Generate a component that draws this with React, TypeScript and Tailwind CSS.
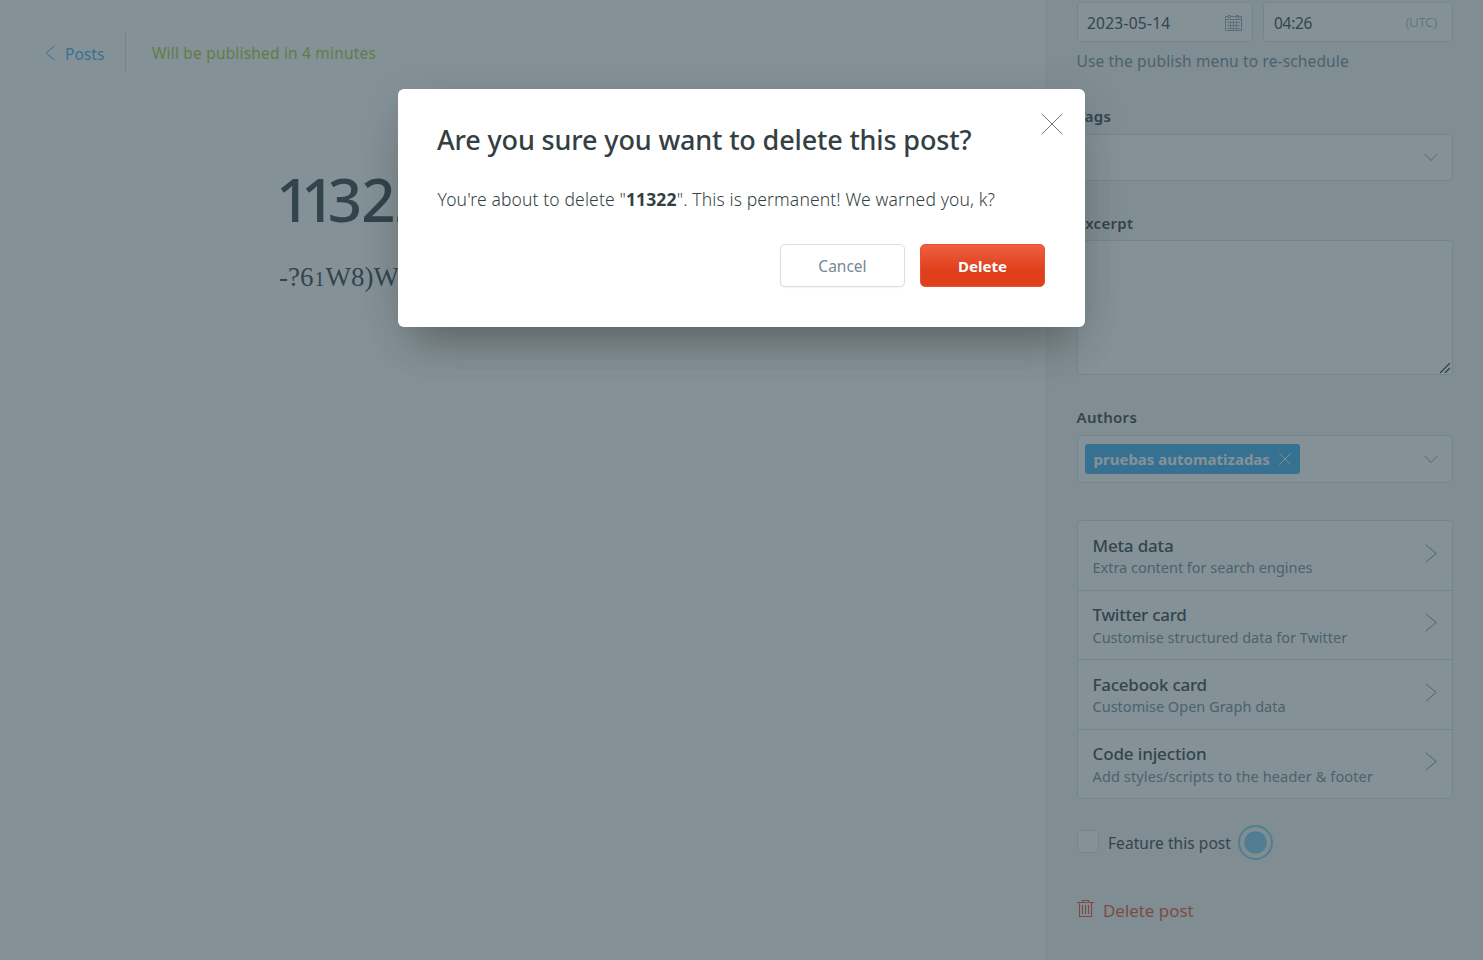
import type { ReactNode } from "react";

const cards = [
  { title: "Meta data", text: "Extra content for search engines", t: "tracking-[-0.17px]", d: "tracking-[-0.02px]" },
  { title: "Twitter card", text: "Customise structured data for Twitter", t: "tracking-[-0.28px]", d: "tracking-[-0.02px]" },
  { title: "Facebook card", text: "Customise Open Graph data", t: "tracking-[-0.24px]", d: "tracking-[0.01px]" },
  { title: "Code injection", text: "Add styles/scripts to the header & footer", t: "tracking-[-0.14px]", d: "tracking-[0.12px]" },
];

function Label({ children, className }: { children: ReactNode; className: string }) {
  return <div className={`text-[15px] leading-5 font-semibold tracking-[0.3px] text-[#343f44] ${className}`}>{children}</div>;
}

function ChevronDown() {
  return (
    <svg width="14" height="9" viewBox="0 0 14 9" fill="none" stroke="#738a94" strokeWidth="0.9">
      <path d="M.7 1 7 7.5 13.3 1" />
    </svg>
  );
}

function CalendarIcon() {
  return (
    <svg width="17" height="17" viewBox="0 0 17 17" fill="none" stroke="#93a5ad" strokeWidth="1">
      <path d="M3 2.5H.5v14h16v-14H14M6 2.5h5M.5 5.5h16" />
      <path d="M3.500 1.500h2v2h-2zM11.500 1.500h2v2h-2z" />
      <path strokeWidth="0.8" d="M2 8.500h13M2 11.500h13M2 14.500h13M5.500 7v9M8.500 7v9M11.500 7v9" />
    </svg>
  );
}

function Sidebar() {
  return (
    <aside className="h-[960px] w-[437px] shrink-0 border-l border-[#e6eef1] bg-[#f4f5f6] pt-[2px] pr-[30px] pl-[30px]">
      <div className="flex gap-[10px]">
        <div className="flex h-10 w-[176px] items-center justify-between rounded border border-[#d4e4ea] bg-white pr-[10px] pl-[9px]">
          <span className="pt-[3px] text-[15.5px] tracking-[0.25px] text-[#343f44]">2023-05-14</span>
          <CalendarIcon />
        </div>
        <div className="flex h-10 w-[190px] items-center justify-between rounded border border-[#d4e4ea] bg-white pr-[15px] pl-[10px]">
          <span className="pt-[3px] text-[15.5px] tracking-[-0.3px] text-[#343f44]">04:26</span>
          <span className="pt-[2px] text-[13px] font-light text-[#8fa2aa]">(UTC)</span>
        </div>
      </div>
      <div className="mt-[9px] -ml-[0.5px] text-[15.5px] leading-5 tracking-[0.14px] text-[#738a94]">Use the publish menu to re-schedule</div>

      <Label className="mt-[35px]">Tags</Label>
      <div className="mt-[8px] flex h-[47px] items-center justify-end rounded border border-[#d4e4ea] bg-white pr-[14px]">
        <ChevronDown />
      </div>

      <Label className="mt-[32px] -ml-[0.5px]">Excerpt</Label>
      <div className="mt-[7px] flex h-[135px] items-end justify-end rounded border border-[#d4e4ea] bg-white pr-[2px] pb-[1px]">
        <svg width="10" height="10" viewBox="0 0 10 10" stroke="#1d2426" strokeWidth="1.2">
          <path d="M0 10 10 0M5 10l5-5" />
        </svg>
      </div>

      <Label className="mt-[32px] -ml-[0.5px]">Authors</Label>
      <div className="mt-[8px] flex h-12 items-center justify-between rounded border border-[#d4e4ea] bg-white pr-[14px] pl-[7px]">
        <div className="flex h-[30px] w-[215px] items-center justify-between rounded-[3px] bg-[#3eb0ef] pr-[9px] pl-[8.5px]">
          <span className="text-[15px] font-bold text-white">pruebas automatizadas</span>
          <svg width="12" height="12" viewBox="0 0 12 12" stroke="white" strokeWidth="0.9">
            <path d="m.4.4 11.200 11.200M11.600.4.4 11.600" />
          </svg>
        </div>
        <ChevronDown />
      </div>

      <div className="mt-[37px] flex h-[279px] flex-col rounded border border-[#d4e4ea] bg-white">
        {cards.map((c, i) => (
          <div key={c.title} className={`flex flex-1 items-center justify-between pr-[15px] pl-[14.5px] ${i ? "border-t border-[#d4e4ea]" : ""}`}>
            <div className="pt-[2px]">
              <div className={`text-[17px] leading-[22px] font-medium text-[#343f44] ${c.t}`}>{c.title}</div>
              <div className={`-mt-[0.5px] text-[14.5px] leading-[22px] text-[#738a94] ${c.d}`}>{c.text}</div>
            </div>
            <svg className="-mt-1" width="12" height="19" viewBox="0 0 12 19" fill="none" stroke="#738a94" strokeWidth="1">
              <path d="m.7.7 10.500 8.800L.7 18.300" />
            </svg>
          </div>
        ))}
      </div>

      <div className="mt-[26px] flex h-[35px] items-center">
        <div className="-mt-[2px] h-[23px] w-[22px] rounded-[4px] border border-[#d4e4ea] bg-white" />
        <span className="ml-[9px] w-[130px] pt-[2px] text-[15.5px] tracking-[0.05px] text-[#343f44]">Feature this post</span>
        <svg width="35" height="35" viewBox="0 0 35 35" fill="none">
          <circle cx="17.500" cy="17.500" r="16.500" stroke="#81cdf5" strokeWidth="2" />
          <circle cx="17.500" cy="17.500" r="11.300" fill="#81cdf5" />
        </svg>
      </div>

      <div className="mt-[39px] flex items-center text-[#f05230]">
        <svg className="-mt-1" width="17" height="18" viewBox="0 0 17 18" fill="none" stroke="currentColor" strokeWidth="1.1">
          <path d="M0 2.500h17M5.500 2.500V.5h6v2M2.500 2.500v14h12v-14M5.500 5v9M8.500 5v9M11.500 5v9" />
        </svg>
        <span className="ml-[9px] text-[17px] leading-6 tracking-[-0.05px]">Delete post</span>
      </div>
    </aside>
  );
}

function Editor() {
  return (
    <main className="h-[960px] flex-1 bg-white">
      <header className="flex h-[74px] items-end pl-[45px]">
        <div className="flex h-11 w-[81px] items-center border-r border-[#d4e4ea] text-[#3eb0ef]">
          <svg className="mt-px" width="11" height="16" viewBox="0 0 11 16" fill="none" stroke="currentColor" strokeWidth="1">
            <path d="M10 .5 1 8l9 7.500" />
          </svg>
          <span className="ml-[9px] pt-[6px] text-[15.5px] tracking-[0.05px]">Posts</span>
        </div>
        <span className="pb-[9px] pl-[26px] text-[15.5px] tracking-[0.18px] text-[#a4d037]">Will be published in 4 minutes</span>
      </header>
      <div className="pt-[85px] pl-[276px]">
        <h1 className="text-[60px] leading-[80px] font-medium tracking-[-1px] text-[#343f44]">
          <span className="tracking-[-9.3px]">1</span>
          <span className="tracking-[-7.5px]">1</span>322
        </h1>
        <p className="mt-[18px] ml-[3px] flex items-baseline font-['Liberation_Serif',serif] text-[27px] leading-10 text-[#343f44]">
          <span>-?6</span>
          <span className="w-[12px] text-center text-[20px]">1</span>
          <span>W8)W</span>
        </p>
      </div>
    </main>
  );
}

function DeleteDialog() {
  return (
    <div className="absolute inset-0 flex items-start justify-center bg-[#324852]/60 pt-[89px]">
      <section
        role="dialog"
        className="relative h-[238px] w-[687px] rounded-[6px] bg-white pt-[33px] pr-10 pl-[39px] shadow-[0_30px_40px_-18px_rgba(50,50,35,0.42),0_8px_50px_rgba(0,0,0,0.1)]"
      >
        <svg className="absolute top-[24px] right-[22px]" width="22" height="22" viewBox="0 0 22 22" stroke="#6f7375" strokeWidth="1">
          <path d="m1 1 20 20M21 1 1 21" />
        </svg>
        <h2 className="text-[27px] leading-9 font-medium tracking-[-0.15px] whitespace-nowrap text-[#343f44]">
          Are you sure you want to delete this post?
        </h2>
        <p className="mt-[29px] ml-[0.5px] text-[17.5px] leading-6 font-light tracking-[0.13px] whitespace-nowrap text-[#343f44]">
          You're about to delete "<strong className="font-bold">11322</strong>". This is permanent! We warned you, k?
        </p>
        <div className="mt-[33px] flex justify-end gap-[15px]">
          <button className="h-[43px] w-[125px] rounded-[5px] border border-[#d4e1e6] bg-white pt-[3px] text-[15.5px] text-[#738a94] shadow-[0_1px_2px_rgba(0,0,0,0.06)]">
            Cancel
          </button>
          <button className="h-[43px] w-[125px] rounded-[5px] border border-[#e6512f] bg-linear-to-b from-[#f05f3f] to-[#df3f1b] to-60% pt-px text-[15px] font-bold text-white">
            Delete
          </button>
        </div>
      </section>
    </div>
  );
}

export default function App() {
  return (
    <div className="relative flex h-[960px] w-[1483px] overflow-hidden font-['Noto_Sans',sans-serif]">
      <Editor />
      <Sidebar />
      <DeleteDialog />
    </div>
  );
}
